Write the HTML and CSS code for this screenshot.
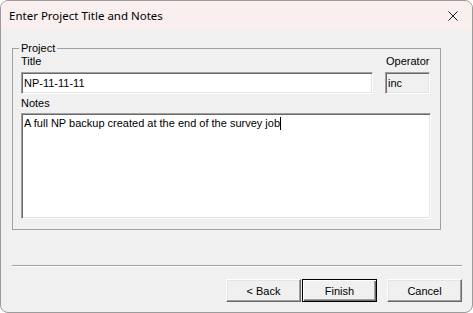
FILE: index.html
```html
<!DOCTYPE html>
<html lang="en">
<head>
    <meta charset="UTF-8">
    <title>Enter Project Title and Notes</title>
    <link rel="stylesheet" href="styles.css">
</head>
<body>
    <div class="window">
        <div class="titlebar">
            <span class="title">Enter Project Title and Notes</span>
            <svg class="close" width="10" height="10" viewBox="0 0 10 10">
                <path d="M0.5 0.5 L9.5 9.5 M9.5 0.5 L0.5 9.5" stroke="#1a1a1a" stroke-width="1" fill="none"/>
            </svg>
        </div>

        <div class="content">
            <fieldset class="group">
                <legend>Project</legend>
                <div class="row">
                    <div class="field field-title">
                        <label for="title">Title</label>
                        <input type="text" id="title" class="edit" value="NP-11-11-11">
                    </div>
                    <div class="field field-op">
                        <label for="operator">Operator</label>
                        <input type="text" id="operator" class="edit readonly" value="inc" readonly>
                    </div>
                </div>
                <label>Notes</label>
                <div class="edit notes">A full NP backup created at the end of the survey job<span class="caret"></span></div>
            </fieldset>

            <div class="separator"></div>

            <div class="buttons">
                <button>&lt; Back</button>
                <button class="default">Finish</button>
                <button class="cancel">Cancel</button>
            </div>
        </div>
    </div>
</body>
</html>
```

FILE: styles.css
```css
body {
    margin: 0;
    background: #ffffff;
    font-family: "Liberation Sans", Arial, sans-serif;
    font-size: 11px;
    color: #000;
}
.window {
    width: 473px;
    height: 313px;
    box-sizing: border-box;
    border: 1px solid #9c9c9c;
    border-radius: 8px;
    background: #f0f0f0;
    overflow: hidden;
}
.titlebar {
    height: 29px;
    background: #f9efee;
    display: flex;
    align-items: center;
    justify-content: space-between;
    padding: 0 14px 0 8px;
}
.title {
    font-family: "Noto Sans", sans-serif;
    font-size: 11.5px;
}
.close {
    display: block;
}
.content {
    padding: 12px 10px 0 11px;
}
.group {
    width: 429px;
    height: 188px;
    box-sizing: border-box;
    margin: 0;
    padding: 0 9px 11px 8px;
    border: 1px solid #a0a0a0;
}
.group legend {
    padding: 0 2px;
    margin-left: -2px;
    line-height: 13px;
}
label {
    display: block;
    line-height: 13px;
}
.row {
    display: flex;
    justify-content: space-between;
    margin-bottom: 3px;
}
.field label {
    margin-bottom: 4px;
}
.field-title {
    width: 352px;
}
.field-op {
    width: 45px;
    margin-right: 1px;
}
.field-op label {
    padding-left: 1px;
}
.edit {
    display: block;
    box-sizing: border-box;
    width: 100%;
    height: 22px;
    margin: 0;
    padding: 0 2px;
    font-family: "Liberation Sans", Arial, sans-serif;
    font-size: 11px;
    color: #000;
    background: #fff;
    border: 1px solid;
    border-color: #a0a0a0 #ffffff #ffffff #a0a0a0;
    box-shadow: inset 1px 1px 0 #696969, inset -1px -1px 0 #e3e3e3;
    outline: none;
}
.readonly {
    background: #f0f0f0;
}
.notes {
    height: 106px;
    margin-top: 3px;
    padding: 3px 2px;
    line-height: 13px;
}
.caret {
    display: inline-block;
    width: 1px;
    height: 13px;
    background: #000;
    vertical-align: top;
}
.separator {
    margin-top: 35px;
    height: 1px;
    border-top: 1px solid #a0a0a0;
    background: #fff;
}
.buttons {
    display: flex;
    justify-content: flex-end;
    margin-top: 12px;
}
button {
    width: 75px;
    height: 23px;
    margin: 0;
    padding: 0;
    font-family: "Liberation Sans", Arial, sans-serif;
    font-size: 11px;
    font-weight: normal;
    color: #000;
    background: #f0f0f0;
    border: 1px solid;
    border-color: #ffffff #696969 #696969 #ffffff;
    box-shadow: inset -1px -1px 0 #a0a0a0, inset 1px 1px 0 #e3e3e3;
}
button.default {
    border: 1px solid #000;
    box-shadow: inset 1px 1px 0 #fff, inset -1px -1px 0 #696969, inset -2px -2px 0 #a0a0a0;
    margin-left: 1px;
}
button.cancel {
    margin-left: 10px;
}
```
